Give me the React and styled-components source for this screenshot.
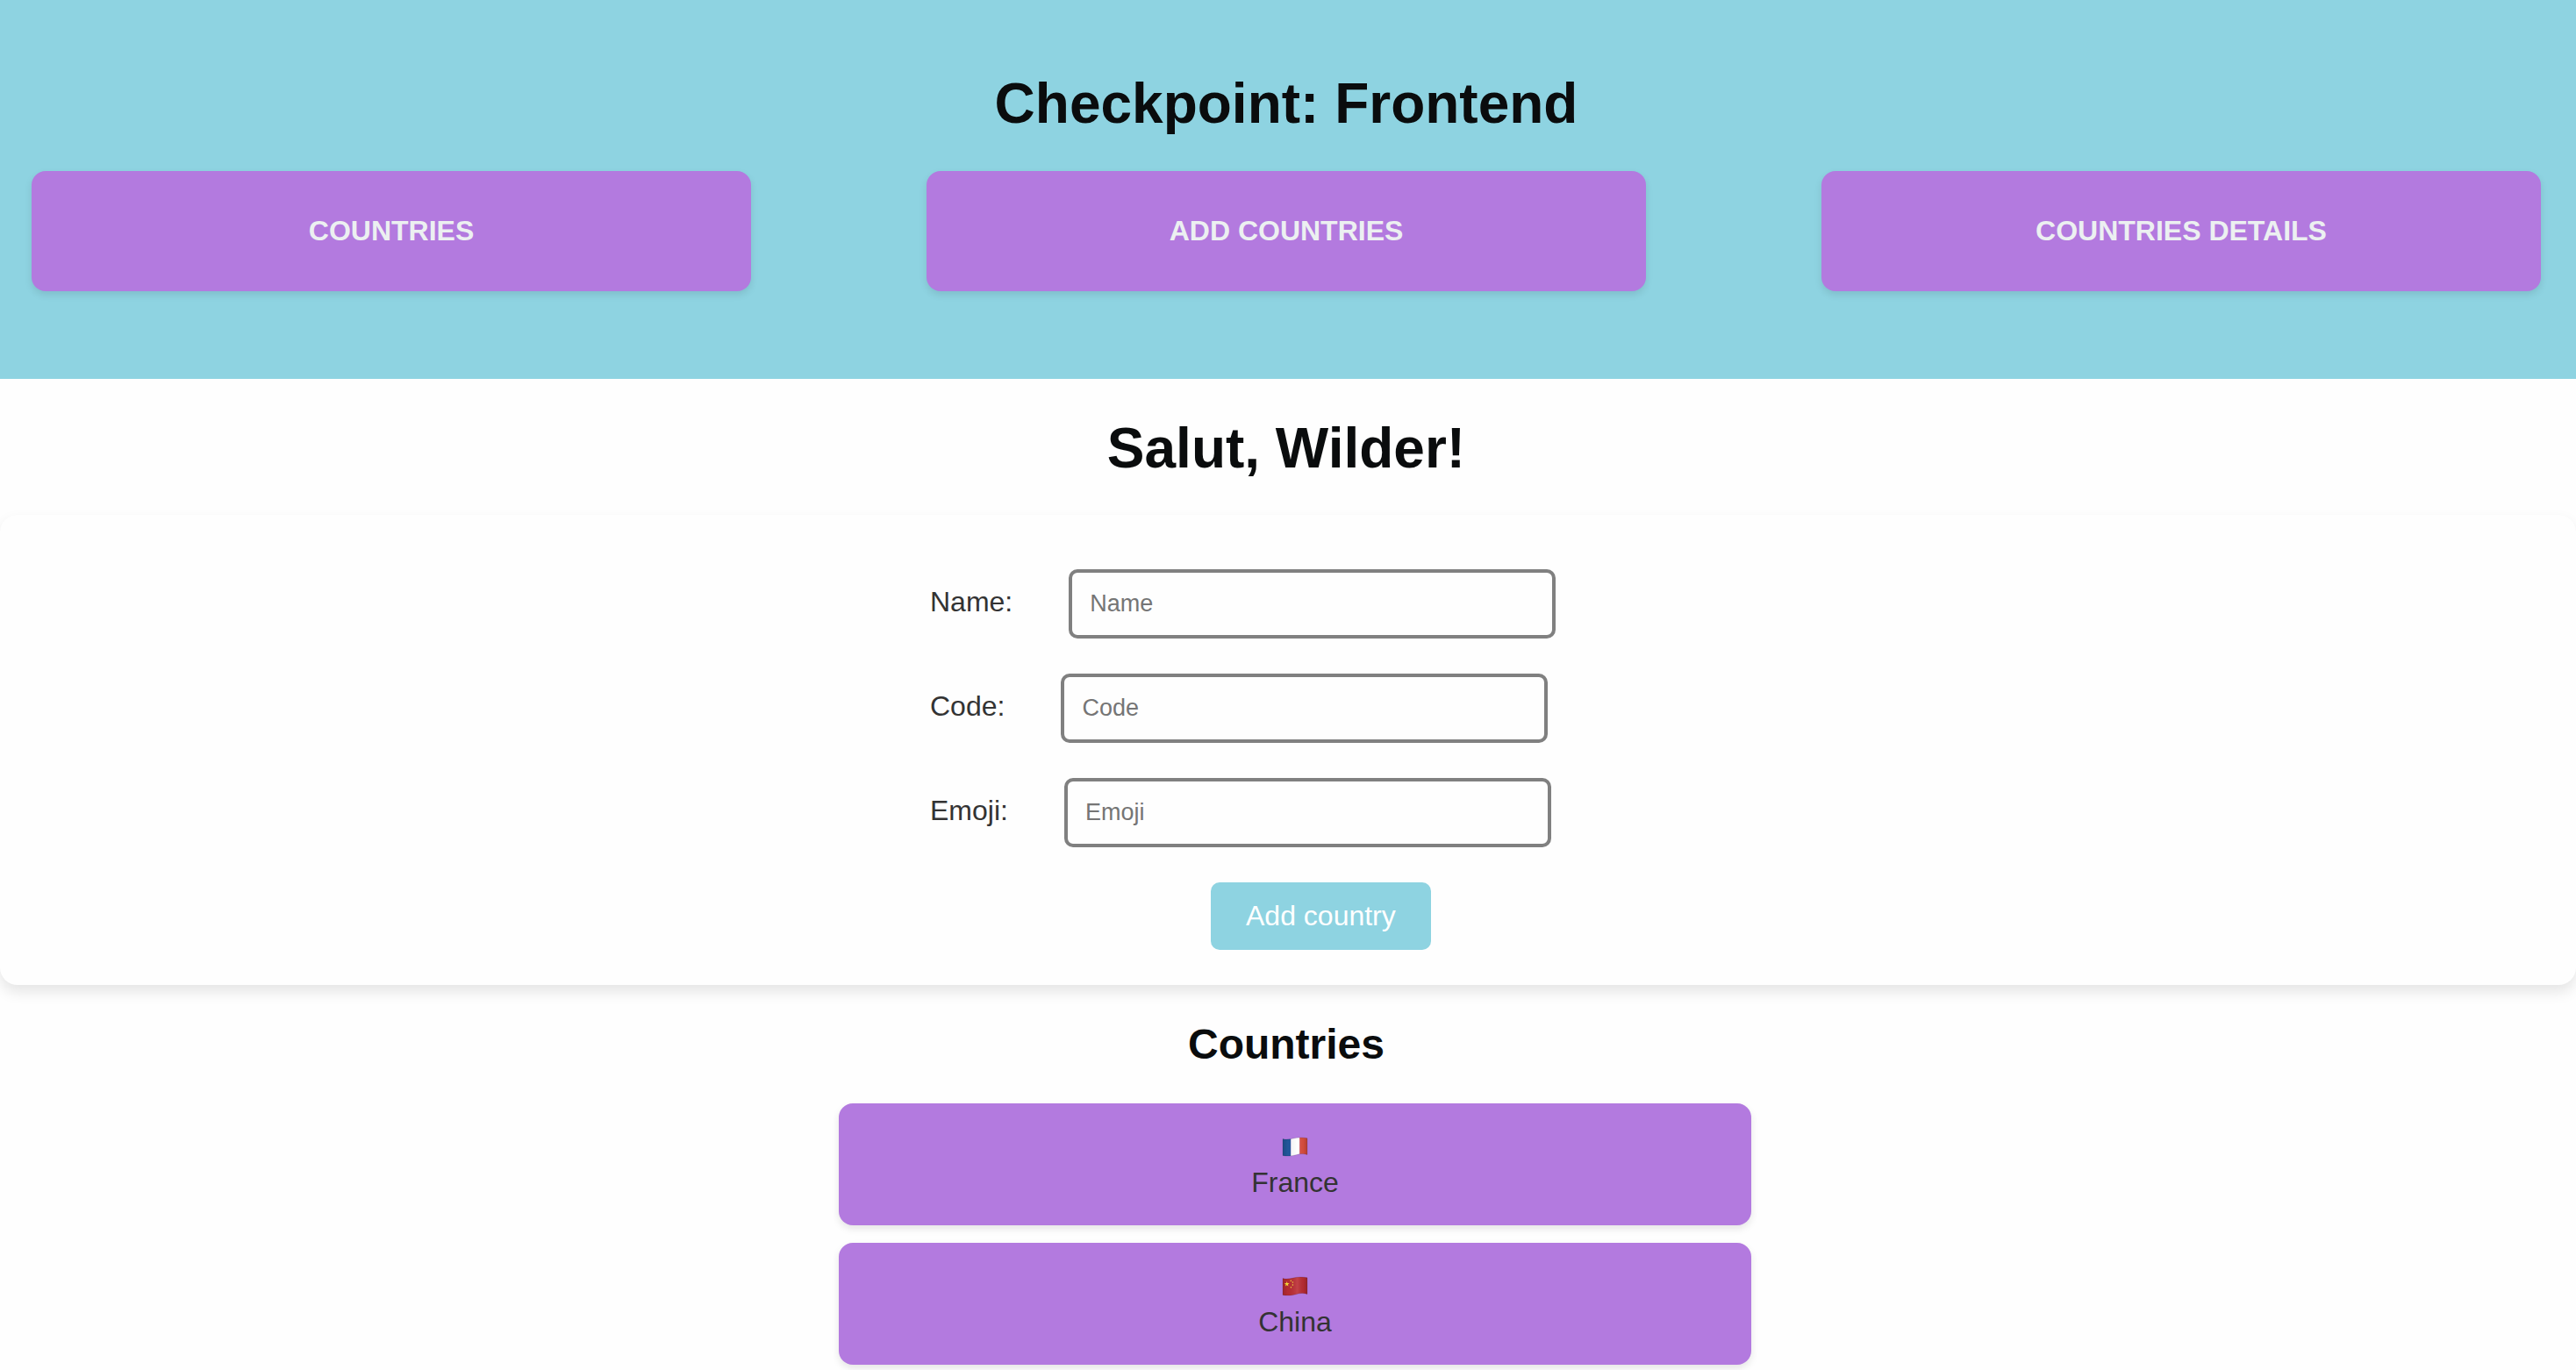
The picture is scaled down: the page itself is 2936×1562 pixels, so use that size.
import React from "react";
import styled, { createGlobalStyle } from "styled-components";

const GlobalStyle = createGlobalStyle`
  *, *::before, *::after {
    box-sizing: border-box;
  }
  body {
    margin: 0;
    background: #fefefe;
    color: #333333;
    font-family: "Liberation Sans", Arial, Helvetica, sans-serif;
    font-size: 32px;
    line-height: 37px;
    overflow-x: hidden;
  }
`;

const Header = styled.header`
  padding: 80px 40px 100px 36px;
  background: #8ed3e1;
`;

const Title = styled.h1`
  margin: 0;
  color: #0a0c0d;
  font-size: 64px;
  line-height: 77px;
  font-weight: 700;
  text-align: center;
`;

const Nav = styled.nav`
  display: grid;
  grid-template-columns: repeat(3, 1fr);
  gap: 200px;
  margin-top: 38px;
`;

const NavLink = styled.a`
  padding: 50px 20px;
  border-radius: 16px;
  background: #b37adf;
  box-shadow: 0 4px 8px rgba(0, 0, 0, 0.1);
  color: #ecf0f1;
  font-weight: 700;
  text-align: center;
  text-decoration: none;
  text-transform: uppercase;
`;

const Greeting = styled.div`
  padding: 41px 40px 37px 36px;
`;

const CountryForm = styled.form`
  display: flex;
  justify-content: center;
  padding: 62px 0 40px;
  border-radius: 20px;
  background: #fefefe;
  box-shadow: 0 8px 16px rgba(0, 0, 0, 0.1);
`;

const Fields = styled.div`
  display: flex;
  flex-direction: column;
  gap: 40px;
  width: 100%;
  max-width: 816px;
`;

const Field = styled.div`
  display: flex;
  align-items: baseline;
  gap: 64px;
`;

const Input = styled.input`
  width: 555px;
  height: 79px;
  padding: 20px;
  border: 4px solid #808080;
  border-radius: 10px;
  background: #fefefe;
  color: #333333;
  font-family: inherit;
  font-size: 27px;

  &::placeholder {
    color: #757575;
    opacity: 1;
  }
`;

const SubmitButton = styled.button`
  align-self: flex-start;
  margin-left: 320px;
  padding: 20px 40px;
  border: none;
  border-radius: 10px;
  background: #8ed3e1;
  color: #ffffff;
  font: inherit;
  cursor: pointer;
`;

const CountriesSection = styled.section`
  padding: 40px 0;
`;

const SectionTitle = styled.h2`
  margin: 0;
  padding: 0 40px 0 36px;
  color: #0a0c0d;
  font-size: 48px;
  line-height: 55px;
  font-weight: 700;
  text-align: center;
`;

const CountryList = styled.ul`
  display: flex;
  flex-direction: column;
  align-items: center;
  gap: 20px;
  margin: 40px 0 0;
  padding: 0 0 0 16px;
  list-style: none;
`;

const CountryCard = styled.li`
  display: flex;
  flex-direction: column;
  align-items: center;
  width: 100%;
  max-width: 1040px;
  padding: 30px;
  border-radius: 16px;
  background: #b37adf;
  box-shadow: 0 4px 8px rgba(0, 0, 0, 0.1);
`;

const Flag = styled.svg`
  display: block;
  width: 32px;
  height: 42px;
`;

const FLAG_SHAPE =
  "M2 10.6 C6 11.6 10 11 14 10 C19 8.8 25 8.6 30 9.8 V28.4 C25 27 21 27.5 17 28.8 C12 30.2 6 30.6 2 29.4 Z";

function FlagDrawing({ id, label, children }) {
  return (
    <Flag viewBox="0 0 32 42" role="img" aria-label={label}>
      <defs>
        <clipPath id={`${id}-clip`}>
          <path d={FLAG_SHAPE} />
        </clipPath>
        <linearGradient id={`${id}-shade`} x1="0" x2="1" y1="0" y2="0">
          <stop offset="0" stopColor="#000" stopOpacity="0.16" />
          <stop offset="0.2" stopColor="#000" stopOpacity="0.04" />
          <stop offset="0.6" stopColor="#fff" stopOpacity="0.1" />
          <stop offset="0.85" stopColor="#000" stopOpacity="0.06" />
          <stop offset="1" stopColor="#000" stopOpacity="0.2" />
        </linearGradient>
      </defs>
      <g clipPath={`url(#${id}-clip)`}>
        {children}
        <rect x="2" y="8" width="28" height="23" fill={`url(#${id}-shade)`} />
      </g>
      <path d={FLAG_SHAPE} fill="none" stroke="#000" strokeOpacity="0.16" strokeWidth="0.8" />
    </Flag>
  );
}

function FranceFlag() {
  return (
    <FlagDrawing id="fr" label="🇫🇷">
      <rect x="2" y="8" width="9.3" height="23" fill="#23599f" />
      <rect x="11.3" y="8" width="10" height="23" fill="#ffffff" />
      <rect x="21.3" y="8" width="9" height="23" fill="#de4f3f" />
    </FlagDrawing>
  );
}

function ChinaFlag() {
  return (
    <FlagDrawing id="cn" label="🇨🇳">
      <rect x="2" y="8" width="28" height="23" fill="#bb2c33" />
      <path
        fill="#ffe63b"
        d="M6.7 14 L7.4 16.1 L9.6 16.1 L7.8 17.4 L8.5 19.6 L6.7 18.3 L4.9 19.6 L5.6 17.4 L3.8 16.1 L6 16.1 Z"
      />
      <g fill="#f4cf3c">
        <circle cx="11.3" cy="13.2" r="0.8" />
        <circle cx="13.4" cy="15" r="0.8" />
        <circle cx="13.4" cy="18" r="0.8" />
        <circle cx="11.4" cy="20.8" r="0.8" />
      </g>
    </FlagDrawing>
  );
}

const links = ["Countries", "Add countries", "Countries details"];
const fields = ["Name", "Code", "Emoji"];
const countries = [
  { name: "France", Emoji: FranceFlag },
  { name: "China", Emoji: ChinaFlag },
];

export default function App() {
  return (
    <>
      <GlobalStyle />
      <Header>
        <Title>Checkpoint: Frontend</Title>
        <Nav>
          {links.map((link) => (
            <NavLink key={link} href="#">
              {link}
            </NavLink>
          ))}
        </Nav>
      </Header>
      <main>
        <Greeting>
          <Title as="h2">Salut, Wilder!</Title>
        </Greeting>
        <CountryForm onSubmit={(event) => event.preventDefault()}>
          <Fields>
            {fields.map((field) => (
              <Field key={field}>
                <label htmlFor={field.toLowerCase()}>{field}:</label>
                <Input id={field.toLowerCase()} type="text" placeholder={field} />
              </Field>
            ))}
            <SubmitButton type="submit">Add country</SubmitButton>
          </Fields>
        </CountryForm>
        <CountriesSection>
          <SectionTitle>Countries</SectionTitle>
          <CountryList>
            {countries.map(({ name, Emoji }) => (
              <CountryCard key={name}>
                <Emoji />
                <span>{name}</span>
              </CountryCard>
            ))}
          </CountryList>
        </CountriesSection>
      </main>
    </>
  );
}
